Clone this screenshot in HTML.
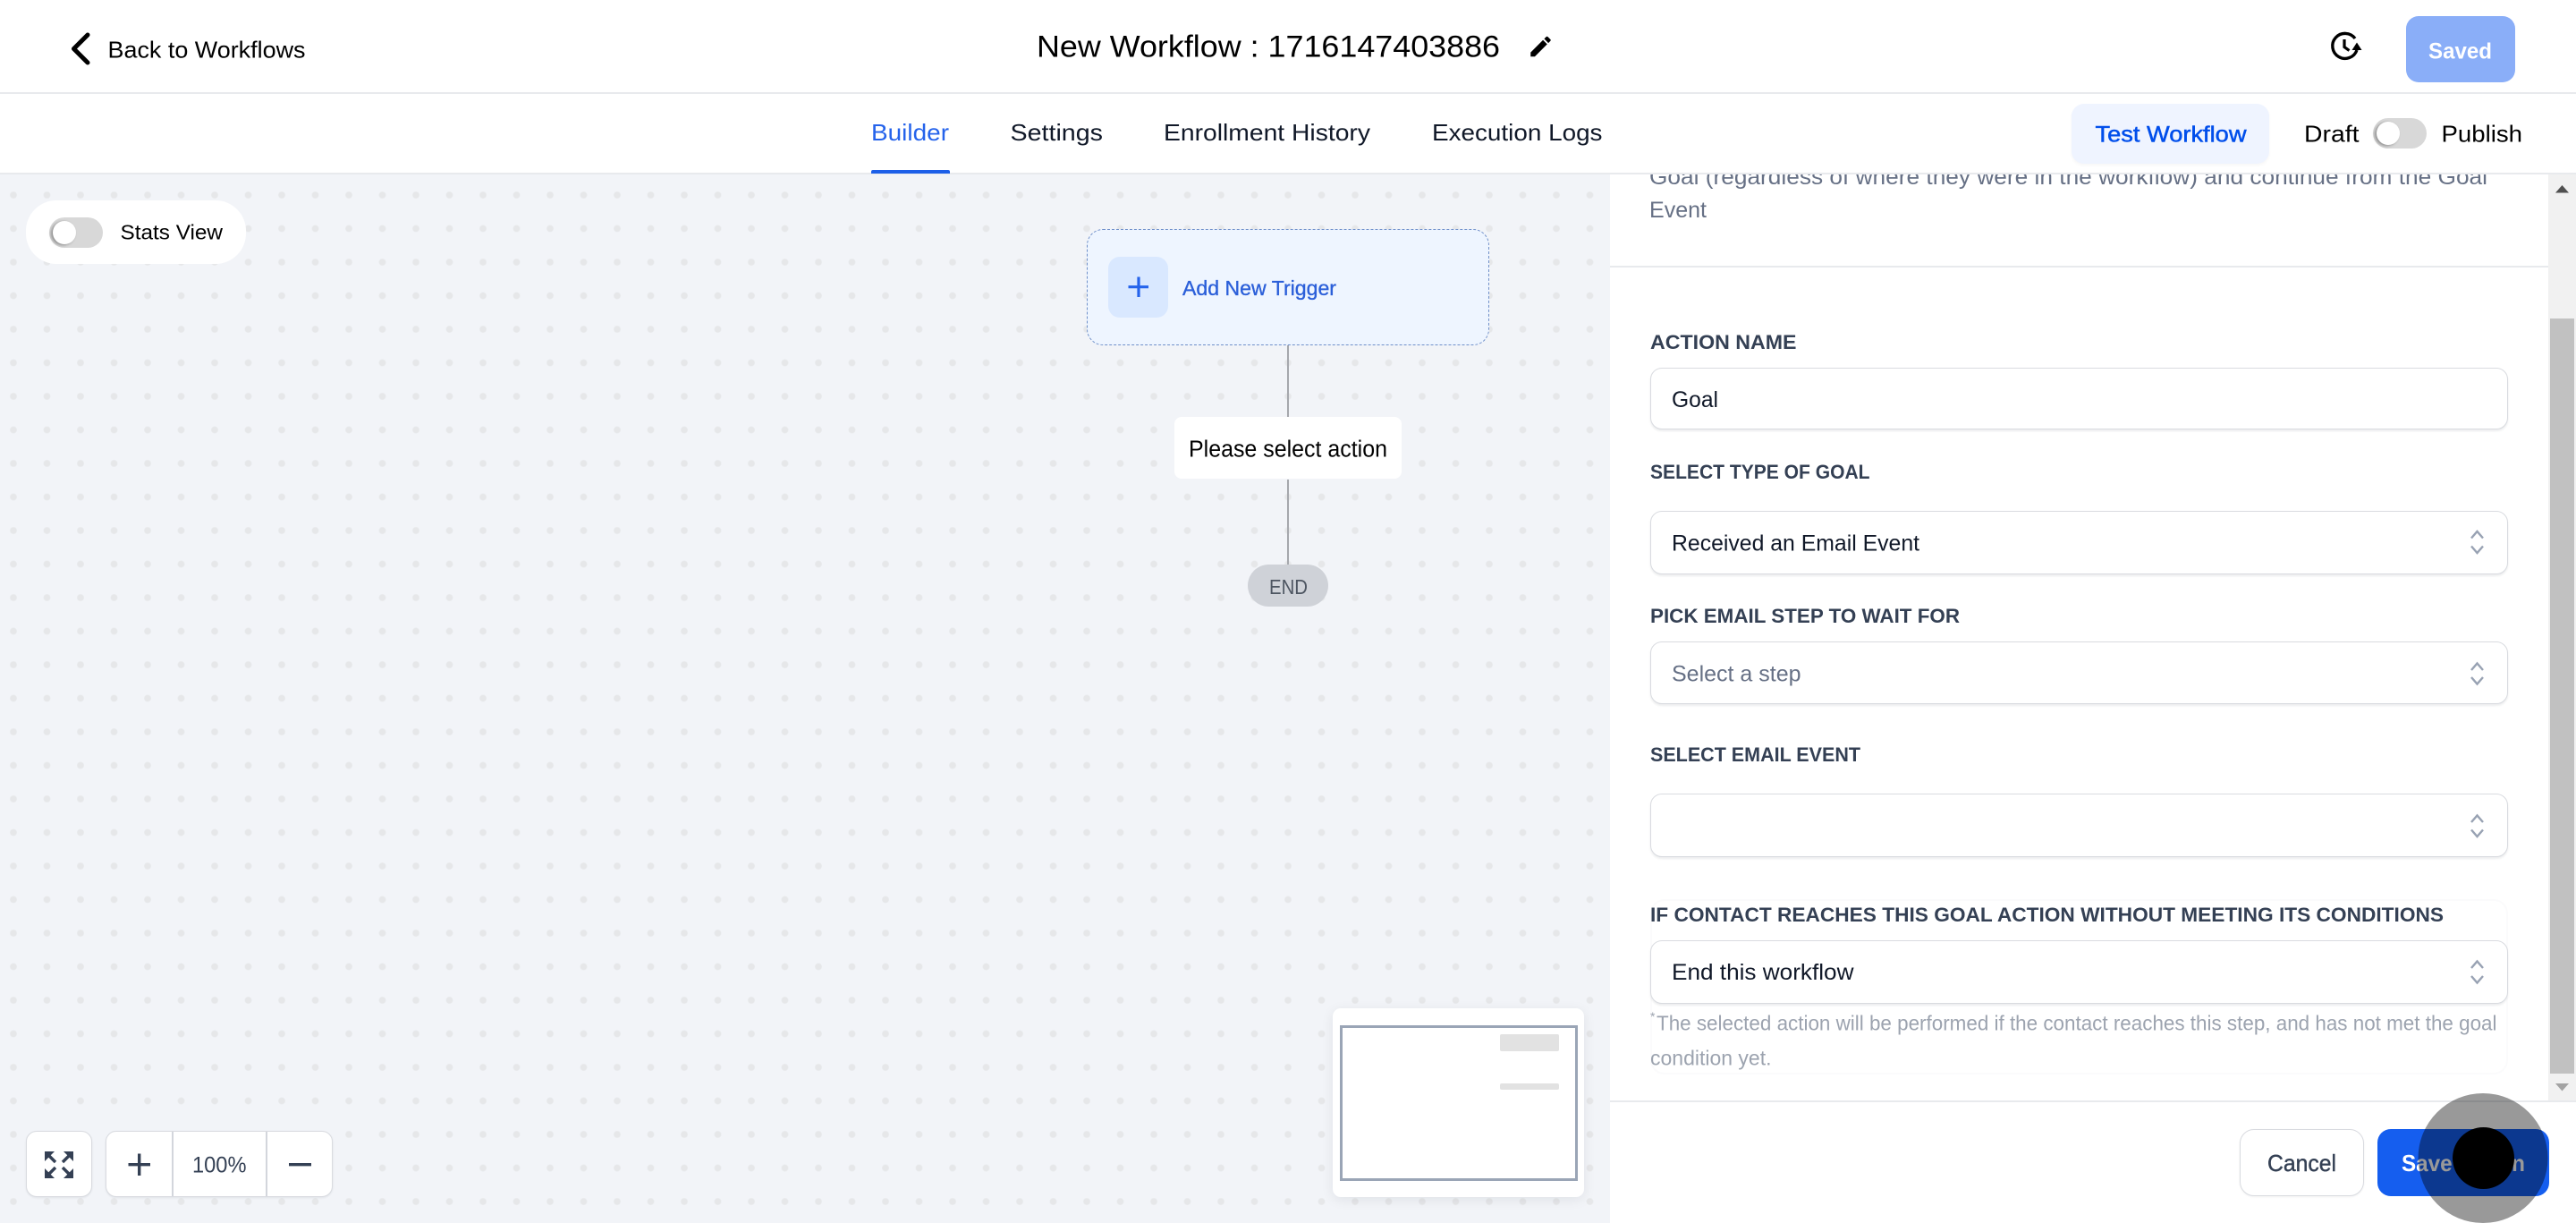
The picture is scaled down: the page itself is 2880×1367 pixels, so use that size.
<!DOCTYPE html>
<html lang="en">
<head>
<meta charset="utf-8">
<title>New Workflow</title>
<style>
html,body{margin:0;padding:0;width:2880px;height:1367px;overflow:hidden;background:#fff;font-family:"Liberation Sans",sans-serif}
.a{position:absolute;box-sizing:border-box}
.canvas{left:0;top:195px;width:1800px;height:1172px;background-color:#f2f4f8;background-image:radial-gradient(circle,#e6e7e9 3.4px,rgba(230,231,233,0) 4.2px);background-size:37.5px 37.5px;background-position:-3.75px 4.25px}
.line{background:#e8eaed}
.tg{background:#d8d8d8;border-radius:18px}
.tg i{position:absolute;left:4px;top:4px;width:26px;height:26px;border-radius:50%;background:#fff;box-shadow:-2px 1px 3px rgba(0,0,0,.35)}
.field{left:1845px;width:959px;background:#fff;border:1.5px solid #d9dbe0;border-radius:13px;box-shadow:0 2px 2px rgba(16,24,40,.08)}
svg{position:absolute;left:0;top:0}
text{font-family:"Liberation Sans",sans-serif}
.l{font-size:22.5px;font-weight:700;fill:#344054}
.v{font-size:25px;fill:#101828}
.n{font-size:26px;fill:#101828}
.h{font-size:23px;fill:#9ca3af}
.p{font-size:25px;fill:#667085}
</style>
</head>
<body>
<div class="a canvas"></div>

<div class="a" style="left:29px;top:224px;width:246px;height:71px;background:#fff;border-radius:34px"></div>
<div class="a tg" style="left:55px;top:243px;width:60px;height:34px"><i></i></div>

<!-- trigger -->
<div class="a" style="left:1215px;top:256px;width:450px;height:130px;background:#eef5ff;border:1.5px dashed #6f8fc9;border-radius:18px"></div>
<div class="a" style="left:1239px;top:287px;width:67px;height:68px;background:#d9e8ff;border-radius:13px"></div>
<div class="a" style="left:1439px;top:386px;width:2px;height:80px;background:#a6a8ad"></div>
<div class="a" style="left:1313px;top:466px;width:254px;height:69px;background:#fff;border-radius:8px"></div>
<div class="a" style="left:1439px;top:536px;width:2px;height:95px;background:#a6a8ad"></div>
<div class="a" style="left:1395px;top:631px;width:90px;height:47px;background:#cfd2d8;border-radius:24px"></div>

<!-- zoom controls -->
<div class="a" style="left:29px;top:1264px;width:74px;height:74px;background:#fff;border:1.5px solid #d9dbe0;border-radius:12px;box-shadow:0 1px 2px rgba(16,24,40,.08)"></div>
<div class="a" style="left:118px;top:1264px;width:254px;height:74px;background:#fff;border:1.5px solid #d9dbe0;border-radius:12px;box-shadow:0 1px 2px rgba(16,24,40,.08)"></div>
<div class="a" style="left:192px;top:1265px;width:1.5px;height:72px;background:#d3d6dc"></div>
<div class="a" style="left:297px;top:1265px;width:1.5px;height:72px;background:#d3d6dc"></div>

<!-- minimap -->
<div class="a" style="left:1490px;top:1127px;width:281px;height:211px;background:#fff;border-radius:9px;box-shadow:0 3px 14px rgba(16,24,40,.08)"></div>
<div class="a" style="left:1498px;top:1146px;width:266px;height:174px;border:3px solid #9aa5b6"></div>
<div class="a" style="left:1677px;top:1156px;width:66px;height:19px;background:#e2e2e2;border-radius:2px"></div>
<div class="a" style="left:1677px;top:1211px;width:66px;height:7px;background:#e2e2e2;border-radius:2px"></div>

<!-- right panel -->
<div class="a" style="left:1800px;top:195px;width:1080px;height:1172px;background:#fff"></div>
<div class="a line" style="left:1800px;top:297px;width:1049px;height:2px"></div>
<div class="a" style="left:2849px;top:195px;width:31px;height:1036px;background:#f1f1f1"></div>
<div class="a" style="left:2851px;top:356px;width:27px;height:844px;background:#c1c1c1"></div>
<div class="a" style="left:1845px;top:1005px;width:959px;height:196px;border:2px solid #fbfbfc;border-radius:16px"></div>
<div class="a field" style="top:411px;height:69px"></div>
<div class="a field" style="top:571px;height:71px"></div>
<div class="a field" style="top:717px;height:70px"></div>
<div class="a field" style="top:887px;height:71px"></div>
<div class="a field" style="top:1051px;height:71px"></div>
<div class="a line" style="left:1800px;top:1230px;width:1080px;height:2px"></div>
<div class="a" style="left:2504px;top:1262px;width:139px;height:75px;background:#fff;border:1.5px solid #d9dbe0;border-radius:16px;box-shadow:0 1px 2px rgba(16,24,40,.06)"></div>
<div class="a" style="left:2658px;top:1262px;width:192px;height:75px;background:#155eef;border-radius:15px"></div>

<!-- header -->
<div class="a" style="left:0;top:0;width:2880px;height:195px;background:#fff"></div>
<div class="a line" style="left:0;top:103px;width:2880px;height:2px"></div>
<div class="a line" style="left:0;top:193px;width:2880px;height:2px"></div>
<div class="a" style="left:974px;top:190px;width:88px;height:4px;background:#1d5fe8;border-radius:2px 2px 0 0"></div>
<div class="a" style="left:2690px;top:18px;width:122px;height:74px;background:#8aaef8;border-radius:14px"></div>
<div class="a" style="left:2316px;top:116px;width:221px;height:67px;background:#eff4ff;border-radius:14px;box-shadow:0 2px 3px rgba(16,24,40,.04)"></div>
<div class="a tg" style="left:2653px;top:132px;width:60px;height:34px"><i></i></div>

<svg width="2880" height="1367" viewBox="0 0 2880 1367" xmlns="http://www.w3.org/2000/svg">
<defs><clipPath id="clipPanel"><rect x="1800" y="195" width="1049" height="1036"/></clipPath></defs>

<!-- header row -->
<path d="M98 39 L82.5 54.5 L98 70" fill="none" stroke="#000" stroke-width="5" stroke-linecap="round" stroke-linejoin="round"/>
<text x="120.5" y="64.5" font-size="26" fill="#000" textLength="221" lengthAdjust="spacingAndGlyphs">Back to Workflows</text>
<text x="1159" y="63.5" font-size="34" fill="#000" textLength="518" lengthAdjust="spacingAndGlyphs">New Workflow : 1716147403886</text>
<g transform="translate(1707.5 37) scale(1.25)"><path d="M3 17.25V21h3.75L17.81 9.94l-3.75-3.75L3 17.25zM20.71 7.04c.39-.39.39-1.02 0-1.41l-2.34-2.34c-.39-.39-1.02-.39-1.41 0l-1.83 1.83 3.75 3.75 1.83-1.83z" fill="#000"/></g>
<path d="M2633 43 A14 14 0 1 0 2635 56" fill="none" stroke="#000" stroke-width="3.4"/>
<path d="M2621 44 V52.5 L2626.5 56.5" fill="none" stroke="#000" stroke-width="3.2"/>
<polygon points="2629.5,56 2640.5,56 2635,47.5" fill="#000"/>
<text x="2715" y="65.5" font-size="25" font-weight="700" fill="#fff" textLength="71" lengthAdjust="spacingAndGlyphs">Saved</text>

<!-- tabs -->
<text x="974" y="157" font-size="26" fill="#2563eb" textLength="87" lengthAdjust="spacingAndGlyphs">Builder</text>
<text x="1129.5" y="157" class="n" textLength="103.5" lengthAdjust="spacingAndGlyphs">Settings</text>
<text x="1301" y="157" class="n" textLength="231" lengthAdjust="spacingAndGlyphs">Enrollment History</text>
<text x="1601" y="157" class="n" textLength="190.5" lengthAdjust="spacingAndGlyphs">Execution Logs</text>
<text x="2342.5" y="158.5" font-size="25" fill="#004eeb" stroke="#004eeb" stroke-width=".5" textLength="169" lengthAdjust="spacingAndGlyphs">Test Workflow</text>
<text x="2576" y="158.5" font-size="26" fill="#000" textLength="61.5" lengthAdjust="spacingAndGlyphs">Draft</text>
<text x="2729.5" y="158.5" font-size="26" fill="#000" textLength="90.5" lengthAdjust="spacingAndGlyphs">Publish</text>

<!-- canvas -->
<text x="134.5" y="267.5" font-size="23" fill="#000" textLength="114.5" lengthAdjust="spacingAndGlyphs">Stats View</text>
<path d="M1273 309.5 V332 M1261.5 320.7 H1284" fill="none" stroke="#2563eb" stroke-width="3.2"/>
<text x="1322" y="330" font-size="23" fill="#2b5fd9" stroke="#2b5fd9" stroke-width=".35" textLength="172" lengthAdjust="spacingAndGlyphs">Add New Trigger</text>
<text x="1329" y="510.5" font-size="25.5" fill="#000" textLength="222" lengthAdjust="spacingAndGlyphs">Please select action</text>
<text x="1419" y="664" font-size="23" fill="#4d5561" textLength="43" lengthAdjust="spacingAndGlyphs">END</text>

<!-- zoom controls -->
<g fill="#344054">
<polygon points="50,1287 61,1287 50,1298"/>
<polygon points="82,1287 71,1287 82,1298"/>
<polygon points="50,1317 61,1317 50,1306"/>
<polygon points="82,1317 71,1317 82,1306"/>
</g>
<g fill="none" stroke="#344054" stroke-width="3.4">
<path d="M53 1290 L62 1299 M79 1290 L70 1299 M53 1314 L62 1305 M79 1314 L70 1305"/>
<path d="M155.7 1289.5 V1314 M143.5 1301.7 H168"/>
<path d="M323 1301.7 H348"/>
</g>
<text x="215" y="1310.5" font-size="25" fill="#344054" textLength="60.5" lengthAdjust="spacingAndGlyphs">100%</text>

<!-- panel -->
<g clip-path="url(#clipPanel)">
<text x="1844" y="206" class="p" textLength="937" lengthAdjust="spacingAndGlyphs">Goal (regardless of where they were in the workflow) and continue from the Goal</text>
<text x="1844" y="243" class="p" textLength="64" lengthAdjust="spacingAndGlyphs">Event</text>
</g>
<polygon points="2864.5,207 2872,215.5 2857,215.5" fill="#505050"/>
<polygon points="2857,1211 2872,1211 2864.5,1219.5" fill="#a3a3a3"/>

<text x="1845" y="390" class="l" textLength="163.5" lengthAdjust="spacingAndGlyphs">ACTION NAME</text>
<text x="1869" y="455" class="v" textLength="52" lengthAdjust="spacingAndGlyphs">Goal</text>
<text x="1845" y="535" class="l" textLength="245.5" lengthAdjust="spacingAndGlyphs">SELECT TYPE OF GOAL</text>
<text x="1869" y="615.5" class="v" textLength="277" lengthAdjust="spacingAndGlyphs">Received an Email Event</text>
<text x="1845" y="696" class="l" textLength="346" lengthAdjust="spacingAndGlyphs">PICK EMAIL STEP TO WAIT FOR</text>
<text x="1869" y="761.5" class="p" textLength="144.5" lengthAdjust="spacingAndGlyphs">Select a step</text>
<text x="1845" y="851" class="l" textLength="235" lengthAdjust="spacingAndGlyphs">SELECT EMAIL EVENT</text>
<text x="1845" y="1030" class="l" textLength="887" lengthAdjust="spacingAndGlyphs">IF CONTACT REACHES THIS GOAL ACTION WITHOUT MEETING ITS CONDITIONS</text>
<text x="1869" y="1095" class="v" textLength="203.5" lengthAdjust="spacingAndGlyphs">End this workflow</text>
<text x="1845" y="1141" font-size="14" fill="#9ca3af">*</text>
<text x="1852" y="1151.5" class="h" textLength="939.5" lengthAdjust="spacingAndGlyphs">The selected action will be performed if the contact reaches this step, and has not met the goal</text>
<text x="1845" y="1190.5" class="h" textLength="135.5" lengthAdjust="spacingAndGlyphs">condition yet.</text>

<g fill="none" stroke="#98a2b3" stroke-width="2.4">
<path d="M2763 601.5 L2769.5 594 L2776 601.5 M2763 610.5 L2769.5 618 L2776 610.5"/>
<path d="M2763 749 L2769.5 741.5 L2776 749 M2763 757 L2769.5 764.5 L2776 757"/>
<path d="M2763 919 L2769.5 911.5 L2776 919 M2763 927.5 L2769.5 935 L2776 927.5"/>
<path d="M2763 1082 L2769.5 1074.5 L2776 1082 M2763 1091 L2769.5 1098.5 L2776 1091"/>
</g>

<!-- footer -->
<text x="2535" y="1309" font-size="26" fill="#344054" stroke="#344054" stroke-width=".4" textLength="77" lengthAdjust="spacingAndGlyphs">Cancel</text>
<text x="2685" y="1309" font-size="26" font-weight="700" fill="#fff" textLength="138" lengthAdjust="spacingAndGlyphs">Save Action</text>

<!-- click marker -->
<circle cx="2776" cy="1294.5" r="72.5" fill="#000" fill-opacity=".4"/>
<circle cx="2776.5" cy="1294.5" r="34.5" fill="#000"/>
</svg>
</body>
</html>
